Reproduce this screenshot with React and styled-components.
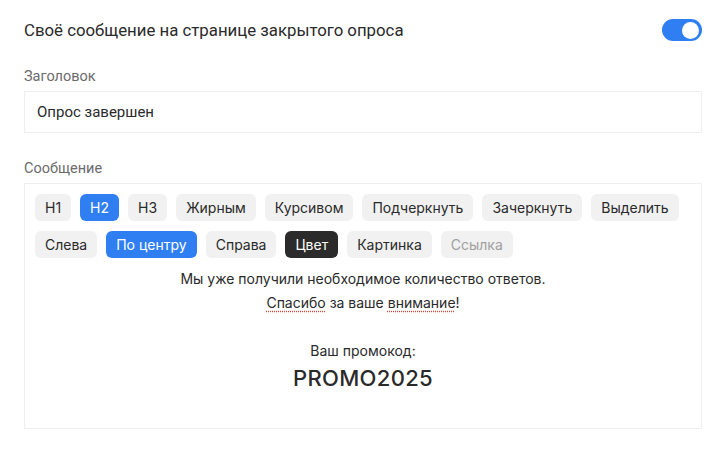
import React, { useState } from 'react';
import styled, { createGlobalStyle } from 'styled-components';

const GlobalStyle = createGlobalStyle`
	body {
		margin: 0;
		background: #fff;
		font-family: Roboto, 'Noto Sans', sans-serif;
		color: #222;
	}
`;

const Page = styled.div`
	padding: 17px 23px 0 24px;
	width: 678px;
`;

const HeaderRow = styled.div`
	display: flex;
	align-items: center;
	justify-content: space-between;
	height: 26px;
`;

const Title = styled.div`
	font-size: 16.8px;
	color: #2a2a2a;
`;

const Toggle = styled.div`
	width: 40px;
	height: 22px;
	border-radius: 11px;
	background: ${(props) => (props.on ? '#2f7ff2' : '#ccc')};
	display: flex;
	align-items: center;
	justify-content: ${(props) => (props.on ? 'flex-end' : 'flex-start')};
	padding: 0 3px;
	box-sizing: border-box;
	cursor: pointer;

	&::after {
		content: '';
		width: 17px;
		height: 17px;
		border-radius: 50%;
		background: #fff;
	}
`;

const Label = styled.div`
	font-size: 14.5px;
	color: #6b6b6b;
	margin-top: ${(props) => props.top}px;
	margin-bottom: 6px;
`;

const Input = styled.div`
	border: 1px solid #efefef;
	height: 42px;
	box-sizing: border-box;
	padding: 0 12px;
	display: flex;
	align-items: center;
	font-size: 15px;
	color: #2a2a2a;
`;

const Editor = styled.div`
	border: 1px solid #efefef;
	height: 246px;
	box-sizing: border-box;
	padding: 10px 10px;
`;

const Toolbar = styled.div`
	display: flex;
	flex-wrap: wrap;
	gap: 10px 9px;
	width: 660px;
`;

const Tool = styled.div`
	height: 27px;
	padding: 0 10px;
	border-radius: 6px;
	display: flex;
	align-items: center;
	font-family: Inter, sans-serif;
	font-size: 14px;
	background: ${(props) =>
		props.variant === 'active' ? '#2f7ff2' : props.variant === 'dark' ? '#2b2b2b' : '#f1f1f1'};
	color: ${(props) =>
		props.variant === 'active' || props.variant === 'dark'
			? '#fff'
			: props.variant === 'disabled'
			? '#a0a0a0'
			: '#2a2a2a'};
`;

const Content = styled.div`
	font-family: Inter, sans-serif;
	text-align: center;
	color: #2a2a2a;
	margin-top: 9px;
`;

const Line = styled.p`
	margin: 0;
	font-size: 14px;
	line-height: 24px;
`;

const Spell = styled.span`
	text-decoration: underline dotted #e0413a;
	text-underline-offset: 3px;
`;

const PromoLabel = styled(Line)`
	margin-top: 24px;
`;

const Promo = styled.div`
	font-size: 22px;
	font-weight: 500;
	margin-top: 2px;
	letter-spacing: 0.3px;
`;

const tools = [
	{ t: 'H1' },
	{ t: 'H2', v: 'active' },
	{ t: 'H3' },
	{ t: 'Жирным' },
	{ t: 'Курсивом' },
	{ t: 'Подчеркнуть' },
	{ t: 'Зачеркнуть' },
	{ t: 'Выделить' },
	{ t: 'Слева' },
	{ t: 'По центру', v: 'active' },
	{ t: 'Справа' },
	{ t: 'Цвет', v: 'dark' },
	{ t: 'Картинка' },
	{ t: 'Ссылка', v: 'disabled' }
];

export default function App() {
	const [ on, setOn ] = useState(true);

	return (
		<Page>
			<GlobalStyle />
			<HeaderRow>
				<Title>Своё сообщение на странице закрытого опроса</Title>
				<Toggle on={on ? 1 : 0} onClick={() => setOn(!on)} />
			</HeaderRow>
			<Label top={25}>Заголовок</Label>
			<Input>Опрос завершен</Input>
			<Label top={27}>Сообщение</Label>
			<Editor>
				<Toolbar>
					{tools.map((tool) => (
						<Tool key={tool.t} variant={tool.v}>
							{tool.t}
						</Tool>
					))}
				</Toolbar>
				<Content>
					<Line>Мы уже получили необходимое количество ответов.</Line>
					<Line>
						<Spell>Спасибо</Spell> за ваше <Spell>внимание</Spell>!
					</Line>
					<PromoLabel>Ваш промокод:</PromoLabel>
					<Promo>PROMO2025</Promo>
				</Content>
			</Editor>
		</Page>
	);
}
